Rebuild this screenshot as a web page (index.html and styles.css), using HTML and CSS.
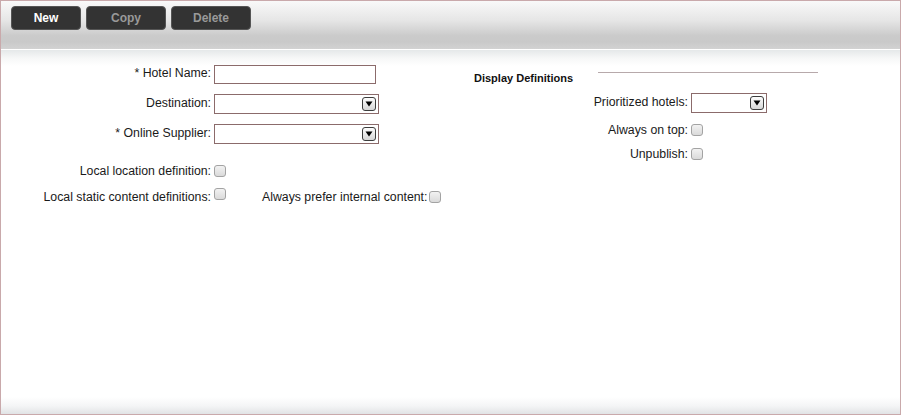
FILE: index.html
```html
<!DOCTYPE html>
<html lang="en">
<head>
    <meta charset="UTF-8">
    <title>Hotel Definition</title>
    <link rel="stylesheet" href="styles.css">
</head>
<body>
    <div class="page">
        <div class="toolbar">
            <button class="tool-btn tool-btn-main">New</button>
            <button class="tool-btn tool-btn-wide" disabled>Copy</button>
            <button class="tool-btn tool-btn-wide" disabled>Delete</button>
        </div>

        <div class="content">
            <div class="col-main">
                <div class="row">
                    <label class="label label-up">* Hotel Name:</label>
                    <input type="text" class="text-input">
                </div>
                <div class="row">
                    <label class="label label-up">Destination:</label>
                    <div class="select">
                        <span class="select-btn">
                            <svg width="8" height="6" viewBox="0 0 8 6"><path d="M0.5 0.5 H7.5 L4 5.5 Z" fill="#000"/></svg>
                        </span>
                    </div>
                </div>
                <div class="row">
                    <label class="label label-up">* Online Supplier:</label>
                    <div class="select">
                        <span class="select-btn">
                            <svg width="8" height="6" viewBox="0 0 8 6"><path d="M0.5 0.5 H7.5 L4 5.5 Z" fill="#000"/></svg>
                        </span>
                    </div>
                </div>
                <div class="row row-check row-first-check">
                    <label class="label">Local location definition:</label>
                    <input type="checkbox" class="check">
                </div>
                <div class="row row-check">
                    <label class="label">Local static content definitions:</label>
                    <input type="checkbox" class="check check-raised">
                    <label class="inline-label">Always prefer internal content:</label>
                    <input type="checkbox" class="check">
                </div>
            </div>

            <div class="col-side">
                <div class="side-head">
                    <span class="side-title">Display Definitions</span>
                    <span class="side-line"></span>
                </div>
                <div class="row">
                    <label class="label label-side label-up">Prioritized hotels:</label>
                    <div class="select select-small">
                        <span class="select-btn">
                            <svg width="8" height="6" viewBox="0 0 8 6"><path d="M0.5 0.5 H7.5 L4 5.5 Z" fill="#000"/></svg>
                        </span>
                    </div>
                </div>
                <div class="row row-short">
                    <label class="label label-side">Always on top:</label>
                    <input type="checkbox" class="check">
                </div>
                <div class="row row-short">
                    <label class="label label-side">Unpublish:</label>
                    <input type="checkbox" class="check">
                </div>
            </div>
        </div>
    </div>
</body>
</html>
```

FILE: styles.css
```css
* {
    margin: 0;
    padding: 0;
    box-sizing: border-box;
}

body {
    font-family: "Liberation Sans", Arial, sans-serif;
    font-size: 12.3px;
    color: #1a1a1a;
    background: #fff;
}

.page {
    width: 901px;
    height: 415px;
    border: 1px solid #c9a9ab;
    display: flex;
    flex-direction: column;
    background: linear-gradient(to top, #e1e3e5 0px, #f4f5f6 8px, #fff 17px);
}

.toolbar {
    height: 49px;
    padding: 5px 10px;
    display: flex;
    align-items: flex-start;
    gap: 5px;
    background: linear-gradient(#f9f9f9 0%, #e6e6e6 40%, #cbcbcb 72%, #c9c9c9 85%, #d2d2d2 100%);
    border-bottom: 1px solid #fff;
}

.tool-btn {
    height: 24px;
    width: 80px;
    background: #333;
    border: 1px solid #555;
    border-radius: 4px;
    font-family: "Liberation Sans", Arial, sans-serif;
    font-size: 12px;
    font-weight: bold;
    color: #999;
}

.tool-btn-main {
    width: 70px;
    color: #fff;
}

.content {
    flex: 1;
    display: flex;
    background: linear-gradient(#e5e8e9 0px, #f6f7f7 8px, rgba(255, 255, 255, 0) 16px);
}

.col-main {
    width: 473px;
    padding-top: 9px;
}

.col-side {
    padding-top: 21px;
}

.row {
    display: flex;
    align-items: center;
    height: 30px;
}

.row-short {
    height: 24px;
}

.row-check {
    height: 22px;
    margin-top: 4px;
}

.row-first-check {
    margin-top: 11px;
}

.label {
    width: 213px;
    padding-right: 3px;
    text-align: right;
    white-space: nowrap;
}

.label-up {
    padding-bottom: 3px;
}

.label-side {
    width: 217px;
}

.inline-label {
    margin-left: 36px;
    margin-right: 2px;
    white-space: nowrap;
}

.text-input {
    width: 162px;
    height: 19px;
    border: 1px solid #8b6b6b;
    background: #fff;
    outline: none;
}

.select {
    width: 165px;
    height: 20px;
    border: 1px solid #8b6b6b;
    background: #fff;
    display: flex;
    align-items: center;
    justify-content: flex-end;
    padding-right: 2px;
}

.select-small {
    width: 76px;
}

.select-btn {
    width: 14px;
    height: 14px;
    border: 1px solid #3c3c3c;
    border-radius: 3px;
    background: linear-gradient(#fdfdfd, #d6d6d6);
    display: flex;
    align-items: center;
    justify-content: center;
}

.check {
    appearance: none;
    -webkit-appearance: none;
    width: 12px;
    height: 12px;
    border: 1px solid #a3a3a3;
    border-radius: 3px;
    background: linear-gradient(#f2f2f2, #dadada);
    margin-left: 0;
}

.check-raised {
    margin-bottom: 6px;
}

.side-head {
    display: flex;
    align-items: flex-start;
    height: 14px;
    margin-bottom: 3px;
}

.side-title {
    font-size: 11px;
    font-weight: bold;
    line-height: 14px;
    color: #111;
}

.side-line {
    width: 220px;
    margin-left: 25px;
    margin-top: 1px;
    border-top: 1px solid #b7a9ab;
}
```
